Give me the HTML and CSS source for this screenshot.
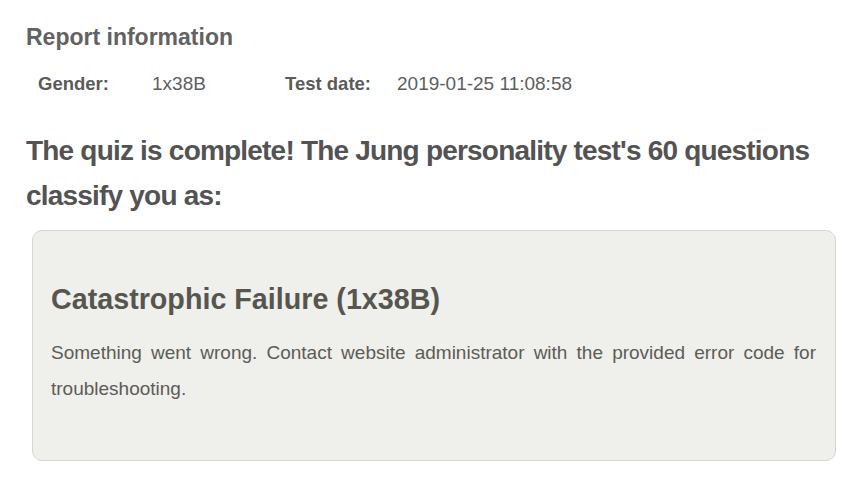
FILE: index.html
```html
<!DOCTYPE html>
<html lang="en">
<head>
<meta charset="utf-8">
<title>Report</title>
<link rel="stylesheet" href="styles.css">
</head>
<body>
<main class="page">
  <h2 class="section-title">Report information</h2>
  <div class="info-row">
    <span class="info-label">Gender:</span>
    <span class="info-value">1x38B</span>
    <span class="info-label">Test date:</span>
    <span class="info-value">2019-01-25 11:08:58</span>
  </div>
  <h1 class="result-heading">The quiz is complete! The Jung personality test's 60 questions classify you as:</h1>
  <section class="result-box">
    <h3 class="result-title">Catastrophic Failure (1x38B)</h3>
    <p class="result-text">Something went wrong. Contact website administrator with the provided error code for troubleshooting.</p>
  </section>
</main>
</body>
</html>
```

FILE: styles.css
```css
html, body {
  margin: 0;
  padding: 0;
  background: #ffffff;
}

body {
  font-family: "Liberation Sans", Arial, sans-serif;
  color: #595959;
}

.page {
  padding: 24px 11px 0 26px;
  display: flex;
  flex-direction: column;
}

.section-title {
  margin: 0;
  font-size: 23px;
  line-height: 27px;
  font-weight: bold;
  color: #626262;
}

.info-row {
  margin-top: 21px;
  padding-left: 12px;
  display: grid;
  grid-template-columns: 114px 133px 112px auto;
  font-size: 19px;
  line-height: 24px;
}

.info-label {
  font-weight: bold;
  font-size: 18.5px;
  color: #5a5a5a;
}

.info-value {
  color: #5e5e5e;
}

.result-heading {
  margin: 32px 0 0 0;
  font-size: 28px;
  line-height: 45px;
  font-weight: bold;
  letter-spacing: -0.8px;
  color: #535353;
}

.result-box {
  margin: 12px 0 0 6px;
  width: 804px;
  box-sizing: border-box;
  border: 1px solid #d6d6d1;
  border-radius: 10px;
  background: #efefeb;
  padding: 51px 19px 53px 18px;
}

.result-title {
  margin: 0;
  font-size: 28.7px;
  line-height: 34px;
  font-weight: bold;
  color: #56564f;
}

.result-text {
  margin: 19px 0 0 0;
  font-size: 19px;
  line-height: 36px;
  text-align: justify;
  color: #5c5c58;
}
```
